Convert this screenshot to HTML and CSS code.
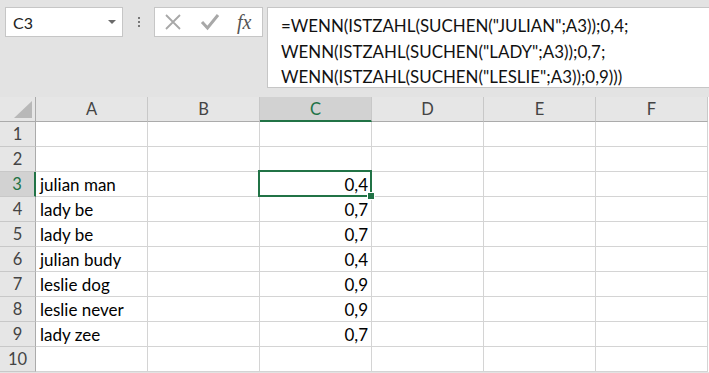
FILE: index.html
```html
<!DOCTYPE html>
<html>
<head>
<meta name="viewport" content="width=device-width, initial-scale=1">
<link rel="stylesheet" href="styles.css">
</head>
<body>

<div class="topbar">
  <div class="namebox">
    <span>C3</span>
    <svg class="caret" width="8" height="5" viewBox="0 0 8 5"><path d="M0 0 L8 0 L4 4 Z" fill="#6a6a6a"/></svg>
  </div>
  <div class="dots"><i></i><i></i><i></i></div>
  <div class="fxbox">
    <svg width="18" height="18" viewBox="0 0 18 18"><path d="M2 2 L16 16 M16 2 L2 16" stroke="#a8a8a8" stroke-width="1.8" fill="none"/></svg>
    <svg width="20" height="18" viewBox="0 0 20 18"><path d="M2 9 L7.5 15 L18 2" stroke="#a8a8a8" stroke-width="3" fill="none"/></svg>
    <span class="fx">fx</span>
  </div>
  <div class="formula">
    =WENN(ISTZAHL(SUCHEN("JULIAN";A3));0,4;<br>
    WENN(ISTZAHL(SUCHEN("LADY";A3));0,7;<br>
    WENN(ISTZAHL(SUCHEN("LESLIE";A3));0,9)))
  </div>
</div>

<div class="sheet">
  <div class="hd corner"><span class="tri"></span></div>
  <div class="hd col">A</div>
  <div class="hd col">B</div>
  <div class="hd col active">C</div>
  <div class="hd col">D</div>
  <div class="hd col">E</div>
  <div class="hd col">F</div>

  <div class="hd row">1</div><div class="cell"></div><div class="cell"></div><div class="cell"></div><div class="cell"></div><div class="cell"></div><div class="cell"></div>
  <div class="hd row">2</div><div class="cell"></div><div class="cell"></div><div class="cell"></div><div class="cell"></div><div class="cell"></div><div class="cell"></div>
  <div class="hd row active">3</div><div class="cell">julian man</div><div class="cell"></div><div class="cell num selected">0,4<span class="handle"></span></div><div class="cell"></div><div class="cell"></div><div class="cell"></div>
  <div class="hd row">4</div><div class="cell">lady be</div><div class="cell"></div><div class="cell num">0,7</div><div class="cell"></div><div class="cell"></div><div class="cell"></div>
  <div class="hd row">5</div><div class="cell">lady be</div><div class="cell"></div><div class="cell num">0,7</div><div class="cell"></div><div class="cell"></div><div class="cell"></div>
  <div class="hd row">6</div><div class="cell">julian budy</div><div class="cell"></div><div class="cell num">0,4</div><div class="cell"></div><div class="cell"></div><div class="cell"></div>
  <div class="hd row">7</div><div class="cell">leslie dog</div><div class="cell"></div><div class="cell num">0,9</div><div class="cell"></div><div class="cell"></div><div class="cell"></div>
  <div class="hd row">8</div><div class="cell">leslie never</div><div class="cell"></div><div class="cell num">0,9</div><div class="cell"></div><div class="cell"></div><div class="cell"></div>
  <div class="hd row">9</div><div class="cell">lady zee</div><div class="cell"></div><div class="cell num">0,7</div><div class="cell"></div><div class="cell"></div><div class="cell"></div>
  <div class="hd row">10</div><div class="cell"></div><div class="cell"></div><div class="cell"></div><div class="cell"></div><div class="cell"></div><div class="cell"></div>
</div>

</body>
</html>
```

FILE: styles.css
```css
body {
  margin: 0;
  background: #e3e3e3;
  font-family: Lato, "Open Sans", sans-serif;
  overflow: hidden;
}

.topbar {
  display: flex;
  align-items: flex-start;
  padding: 7px 0 0 5px;
  height: 90px;
}

.namebox {
  background: #fff;
  border: 1px solid #c6c6c6;
  display: flex;
  align-items: center;
  justify-content: space-between;
  padding: 0 6px 0 7px;
  box-sizing: border-box;
  width: 118px;
  height: 30px;
  font-size: 16px;
  color: #222;
}

.caret {
  margin-top: 1px;
}

.dots {
  width: 31px;
  height: 30px;
  display: flex;
  flex-direction: column;
  align-items: center;
  justify-content: center;
  gap: 2px;
}

.dots i {
  width: 2px;
  height: 2px;
  background: #777;
}

.fxbox {
  width: 109px;
  height: 30px;
  box-sizing: border-box;
  background: #fff;
  border: 1px solid #c6c6c6;
  display: flex;
  align-items: center;
  gap: 18px;
  padding-left: 9px;
}

.fx {
  font-family: "Liberation Serif", serif;
  font-style: italic;
  font-size: 20px;
  color: #555;
  margin-left: -1px;
}

.formula {
  margin-left: 4px;
  flex: 1;
  height: 81px;
  box-sizing: border-box;
  background: #fff;
  border: 1px solid #c6c6c6;
  border-right: none;
  padding: 5px 0 0 13px;
  font-size: 16.9px;
  line-height: 25.5px;
  color: #111;
  white-space: nowrap;
}

.sheet {
  display: grid;
  grid-template-columns: 36px repeat(6, 112px);
  grid-template-rows: repeat(11, 25px);
  background: #fff;
  width: 709px;
}

.hd {
  background: #e6e6e6;
  color: #444;
  font-size: 16.5px;
  display: flex;
  align-items: center;
  justify-content: center;
  box-sizing: border-box;
}

.col {
  border-right: 1px solid #c8c8c8;
  border-bottom: 1px solid #ababab;
}

.row {
  border-right: 1px solid #ababab;
  border-bottom: 1px solid #c8c8c8;
}

.corner {
  border-right: 1px solid #ababab;
  border-bottom: 1px solid #ababab;
  position: relative;
}

.tri {
  position: absolute;
  right: 3px;
  bottom: 3px;
  width: 0;
  height: 0;
  border-left: 18px solid transparent;
  border-bottom: 17px solid #b8b8b8;
}

.hd.active {
  background: #d2d2d2;
  color: #217346;
}

.col.active {
  border-bottom: 2px solid #217346;
}

.row.active {
  border-right: 2px solid #217346;
}

.cell {
  border-right: 1px solid #d4d4d4;
  border-bottom: 1px solid #d4d4d4;
  box-sizing: border-box;
  font-size: 17px;
  color: #000;
  display: flex;
  align-items: flex-end;
  padding: 0 3px 1px 4px;
  white-space: nowrap;
}

.num {
  justify-content: flex-end;
}

.selected {
  position: relative;
}

.selected::after {
  content: "";
  position: absolute;
  left: -2px;
  top: -2px;
  right: -1px;
  bottom: -1px;
  border: 2px solid #217346;
}

.handle {
  position: absolute;
  right: -4px;
  bottom: -4px;
  width: 6px;
  height: 6px;
  background: #217346;
  border: 1px solid #fff;
  z-index: 2;
}
```
